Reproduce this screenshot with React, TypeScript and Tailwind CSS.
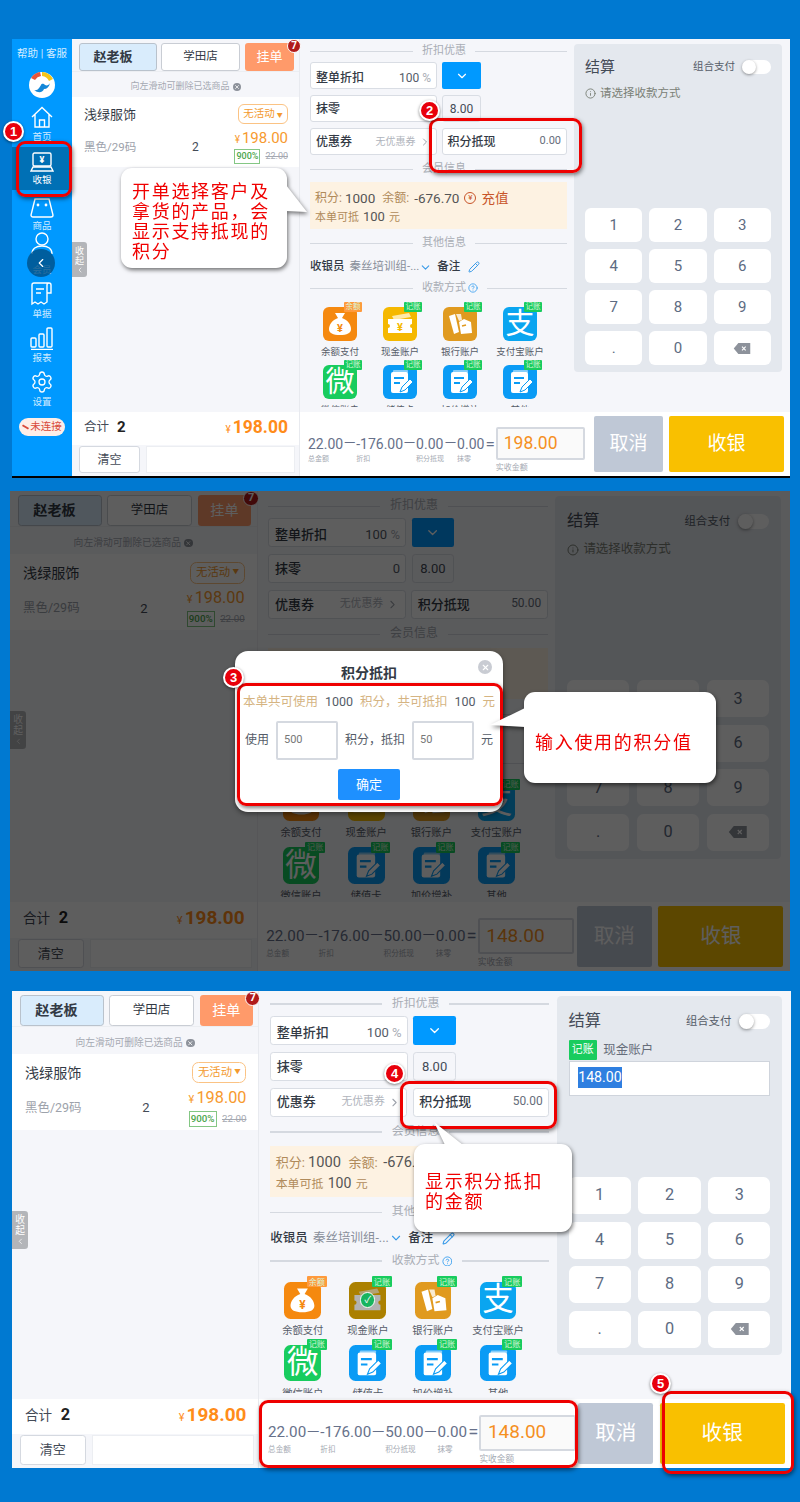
// Cashier walkthrough: three annotated shots of the POS checkout screen

import React from 'react';
import { ChevronDown, ChevronLeft, ChevronRight, CircleHelp, Info, Pencil, Settings, X } from 'lucide-react';

function Section({ title, help }: { title: string; help?: boolean }) {
  return (
    <div className="flex h-[14px] items-center gap-[8px] text-[11px] text-[#a9adb5]">
      <div className="h-px w-[103px] bg-[#d5d9e0]" />
      <span className="flex items-center gap-[2px] whitespace-nowrap px-px">
        {title}
        {help && <CircleHelp className="h-[10px] w-[10px] text-[#3aa0f0]" />}
      </span>
      <div className="h-px flex-1 bg-[#d5d9e0]" />
    </div>
  );
}

function Field({ label, className, children }: { label: string; className: string; children?: React.ReactNode }) {
  return (
    <div className={`flex h-[27px] items-center justify-between rounded-[3px] border border-[#d9dde4] bg-white px-[5px] ${className}`}>
      <span className="whitespace-nowrap text-[12px] font-medium text-[#333a45]">{label}</span>
      {children}
    </div>
  );
}

function Tag({ text = '记账', orange }: { text?: string; orange?: boolean }) {
  return (
    <span className={`absolute right-[-5px] top-[-5px] flex h-[10px] w-[18px] items-center justify-center rounded-[1px] text-[7.5px] leading-none text-[#d8f5d8] ${orange ? 'bg-[#ff9a3c]' : 'bg-[#18cc5e]'}`}>
      {text}
    </span>
  );
}

function NoteIcon() {
  return (
    <svg viewBox="0 0 34 34" className="h-full w-full">
      <rect x="10" y="5" width="15" height="3" rx="1" fill="#fff" opacity=".5" />
      <rect x="8" y="7" width="17" height="21" rx="2" fill="#fff" />
      <path d="M11 13h10M11 18h6" stroke="#0a9bf5" strokeWidth="2" />
      <path d="M17 27l2-5 8-8 3 3-8 8z" fill="#fff" stroke="#0a9bf5" />
    </svg>
  );
}

function BagIcon() {
  return (
    <svg viewBox="0 0 34 34" className="h-full w-full">
      <path d="M12 6h10l-3 5c6 2 9 7 9 11 0 4-4 6-11 6S6 26 6 22c0-4 3-9 9-11z" fill="#fff" />
      <text x="17" y="25" textAnchor="middle" fontSize="11" fontWeight="700" fill="#f5890f">¥</text>
    </svg>
  );
}

function TicketIcon() {
  return (
    <svg viewBox="0 0 34 34" className="h-full w-full">
      <path d="M9 9l17-3 2 4-17 3z" fill="#ffe9a8" />
      <path d="M5 12h24v5a2 2 0 000 4v5H5v-5a2 2 0 000-4z" fill="#fff" />
      <text x="17" y="24" textAnchor="middle" fontSize="11" fontWeight="700" fill="#f5b800">¥</text>
    </svg>
  );
}

function BankIcon() {
  return (
    <svg viewBox="0 0 34 34" className="h-full w-full">
      <path d="M6 9l6-2 4 18-5 2z" fill="#fff" />
      <path d="M13 7l5 0 1 6-3 1z" fill="#fff" opacity=".8" />
      <path d="M16 15l5-3 7 3 1 11-11 1z" fill="#fff" />
      <path d="M19 19l4-1" stroke="#e09a1f" strokeWidth="1.5" />
    </svg>
  );
}

function PayItem({ label, color, tag, children, checked }: { label: string; color: string; tag?: React.ReactNode; children: React.ReactNode; checked?: boolean }) {
  return (
    <div className="flex h-[58px] flex-col items-center">
      <div className={`relative flex h-[34px] w-[34px] items-center justify-center rounded-[6px] ${color}`}>
        {children}
        {checked && (
          <div className="absolute inset-0 flex items-center justify-center rounded-[6px] bg-black/30">
            <div className="flex h-[14px] w-[14px] items-center justify-center rounded-full border border-white bg-[#18b45e] text-[9px] text-white">✓</div>
          </div>
        )}
        {tag ?? <Tag />}
      </div>
      <span className="mt-[5px] whitespace-nowrap text-[9.5px] leading-[12px] text-[#555c68]">{label}</span>
    </div>
  );
}

function Sum({ value, label }: { value: string; label: string }) {
  return (
    <div className="flex flex-col">
      <span className="text-[14px] leading-[18px] text-[#67718a]">{value}</span>
      <span className="mt-[2px] whitespace-nowrap text-[7px] leading-[9px] text-[#a5aab3]">{label}</span>
    </div>
  );
}

function Minus() {
  return <span className="mx-px text-[11px] leading-[18px] text-[#67718a]">一</span>;
}

function Terminal({ className, midTop, points, received, zero, cash }: { className: string; midTop: string; points: string; received: string; zero?: boolean; cash?: boolean }) {
  const keys = ['1', '2', '3', '4', '5', '6', '7', '8', '9', '.', '0'];
  return (
    <div className={`flex bg-[#f5f6fa] [font-family:Roboto,'Noto_Sans_CJK_SC',sans-serif] ${className}`}>
      {/* Order column */}
      <div className="flex w-[228px] shrink-0 flex-col border-r border-[#e8eaef]">
        <div className="flex h-[33px] items-start gap-[4px] border-b border-[#eceef2] pl-[7px] pt-[4px]">
          <div className="flex h-[28px] w-[78px] items-center justify-center rounded-[3px] border border-[#b9c2cc] bg-[#d9ecfc] pr-[10px] text-[13px] font-bold text-[#333a45]">赵老板</div>
          <div className="flex h-[28px] w-[79px] items-center justify-center rounded-[3px] border border-[#c9cdd4] bg-white text-[11.5px] text-[#333a45]">学田店</div>
          <div className="relative ml-px flex h-[28px] w-[49px] items-center justify-center rounded-[3px] bg-[#ff9a6a] text-[13px] text-white">
            挂单
            <span className="absolute right-[-7px] top-[-4px] flex h-[14px] w-[14px] items-center justify-center rounded-full border border-white bg-[#b01a1a] text-[10px] font-bold leading-none text-white">7</span>
          </div>
        </div>
        <div className="flex h-[25px] items-center justify-center gap-[3px] pt-[5px] text-[9px] text-[#a5a9b2]">
          向左滑动可删除已选商品
          <span className="flex h-[8px] w-[8px] items-center justify-center rounded-full bg-[#8d929b]">
            <X className="h-[6px] w-[6px] text-white" strokeWidth={3} />
          </span>
        </div>
        <div className="relative flex-1">
          <div className="flex h-[70px] flex-col justify-between bg-white pb-[3px] pl-[12px] pr-[11px] pt-[7px]">
            <div className="flex items-center justify-between">
              <span className="pt-px text-[13px] text-[#333a45]">浅绿服饰</span>
              <span className="flex h-[20px] w-[50px] items-center justify-center gap-[2px] rounded-[6px] border border-[#fbc384] text-[10.5px] text-[#f39a2e]">
                无活动<span className="text-[6px]">▼</span>
              </span>
            </div>
            <div className="flex items-end justify-between">
              <span className="mb-[8px] w-[108px] text-[11.5px] text-[#9da2ab]">黑色/29码</span>
              <span className="mb-[8px] w-[38px] text-[12px] text-[#444b57]">2</span>
              <div className="flex flex-1 flex-col items-end gap-[1px]">
                <span className="whitespace-nowrap text-[15px] leading-[17px] text-[#f79a2e]"><span className="mr-[2px] text-[10px]">¥</span>198.00</span>
                <span className="flex items-center gap-[5px] whitespace-nowrap text-[9px] leading-[13px] text-[#a5a9b2]">
                  <span className="border border-[#84c784] px-px font-medium text-[#4ca64c]">900%</span>
                  <span className="line-through">22.00</span>
                </span>
              </div>
            </div>
          </div>
          <div className="absolute left-0 top-[145px] flex h-[35px] w-[15px] flex-col items-center justify-center rounded-r-[3px] bg-[#b3b5b9] text-[9px] leading-[10px] text-white">
            收<br />起
            <ChevronLeft className="h-[8px] w-[8px]" />
          </div>
        </div>
        <div className="flex h-[33px] items-center justify-between bg-white pb-[3px] pl-[12px] pr-[11px]">
          <span className="flex items-center gap-[8px] text-[12.5px] text-[#444b57]">合计<b className="text-[15px] text-[#222]">2</b></span>
          <span className="text-[17.5px] font-bold text-[#ff8c1a]"><span className="mr-[2px] text-[10px] font-normal">¥</span>198.00</span>
        </div>
        <div className="flex max-h-[31px] flex-1 items-start gap-[6px] pl-[7px] pr-[4px] pt-[1px]">
          <div className="flex h-[27px] w-[61px] items-center justify-center rounded-[3px] border border-[#d5d9e0] bg-white text-[12px] text-[#444b57]">清空</div>
          <div className="h-[27px] flex-1 border border-[#eceef2] bg-white" />
        </div>
      </div>

      {/* Checkout column */}
      <div className="flex min-w-0 flex-1 flex-col">
        <div className="flex min-h-0 flex-1">
          <div className={`mb-[5px] w-[274px] shrink-0 overflow-hidden pl-[10px] pr-[7px] ${midTop}`}>
            <Section title="折扣优惠" />
            <div className="mt-[4px] flex gap-[5px]">
              <Field label="整单折扣" className="w-[127px] pt-[4px]">
                <span className="text-[12px] text-[#555c68]">100 <span className="text-[#a9adb5]">%</span></span>
              </Field>
              <div className="flex h-[27px] w-[39px] items-center justify-center rounded-[2px] bg-[#0099ff]">
                <ChevronDown className="h-[14px] w-[14px] text-white" />
              </div>
            </div>
            <div className="mt-[6px] flex gap-[5px]">
              <Field label="抹零" className="w-[127px]">
                <span className="text-[12px] text-[#555c68]">{zero ? '0' : ''}</span>
              </Field>
              <div className="flex h-[27px] w-[39px] items-center justify-center rounded-[3px] border border-[#d9dde4] text-[12px] text-[#444b57]">8.00</div>
            </div>
            <div className="mt-[6px] flex gap-[5px]">
              <Field label="优惠券" className="w-[127px]">
                <span className="flex items-center text-[10px] text-[#b0b4bc]">无优惠券<ChevronRight className="ml-[3px] h-[12px] w-[12px] text-[#9da2ab]" /></span>
              </Field>
              <Field label="积分抵现" className="w-[126px]">
                <span className="text-[11px] text-[#666d7a]">{points}</span>
              </Field>
            </div>
            <div className="mt-[7px]"><Section title="会员信息" /></div>
            <div className="mt-[6px] h-[47px] bg-[#fdf2e2] px-[5px] pt-[5px] text-[#b08a5a]">
              <div className="flex items-center whitespace-nowrap text-[12px] leading-[22px]">
                积分:<span className="ml-[3px] text-[13.5px] text-[#555]">1000</span>
                <span className="ml-[7px]">余额:</span><span className="ml-[5px] text-[13.5px] text-[#555]">-676.70</span>
                <span className="ml-[5px] flex h-[12px] w-[12px] items-center justify-center rounded-full border border-[#c8552a] text-[8px] text-[#c8552a]">¥</span>
                <span className="ml-[5px] text-[13.5px] text-[#c8552a]">充值</span>
              </div>
              <div className="whitespace-nowrap text-[11px] leading-[16px]">本单可抵<span className="mx-[4px] text-[13px] text-[#555]">100</span>元</div>
            </div>
            <div className="mt-[7px]"><Section title="其他信息" /></div>
            <div className="mt-[7px] flex h-[20px] items-center whitespace-nowrap text-[11.5px]">
              <span className="font-medium text-[#333a45]">收银员</span>
              <span className="ml-[5px] text-[#888e99]">秦丝培训组-...</span>
              <ChevronDown className="h-[13px] w-[13px] text-[#3a9be8]" />
              <span className="ml-[5px] font-medium text-[#333a45]">备注</span>
              <Pencil className="ml-[8px] h-[12px] w-[12px] text-[#3a9be8]" />
            </div>
            <div className="mt-[4px]"><Section title="收款方式" help /></div>
            <div className="mt-[12px] grid grid-cols-[60px_60px_60px_60px]">
              <PayItem label="余额支付" color="bg-[#f5890f]" tag={<Tag text="余额" orange />}><BagIcon /></PayItem>
              <PayItem label="现金账户" color="bg-[#f5b800]" checked={cash}><TicketIcon /></PayItem>
              <PayItem label="银行账户" color="bg-[#e09a1f]"><BankIcon /></PayItem>
              <PayItem label="支付宝账户" color="bg-[#0aa5f0]"><span className="text-[29px] leading-none text-white">支</span></PayItem>
              <PayItem label="微信账户" color="bg-[#18cc5e]"><span className="text-[29px] leading-none text-white">微</span></PayItem>
              <PayItem label="储值卡" color="bg-[#0a9bf5]"><NoteIcon /></PayItem>
              <PayItem label="加价增补" color="bg-[#0a9bf5]"><NoteIcon /></PayItem>
              <PayItem label="其他" color="bg-[#0a9bf5]"><NoteIcon /></PayItem>
            </div>
          </div>

          <div className="mb-[40px] mr-[8px] mt-[5px] flex flex-1 flex-col rounded-[4px] bg-[#e4e8ee] px-[11px] pb-[7px] pt-[12px]">
            <div className="flex items-center justify-between">
              <span className="text-[15px] text-[#444b57]">结算</span>
              <span className="flex items-center gap-[7px] text-[10.5px] text-[#555c68]">
                组合支付
                <span className="flex h-[14px] w-[29px] items-center rounded-full bg-white">
                  <span className="h-[14px] w-[14px] rounded-full bg-white shadow-[0_1px_3px_rgba(0,0,0,0.4)]" />
                </span>
              </span>
            </div>
            {cash ? (
              <div className="mt-[6px]">
                <div className="flex items-center gap-[6px] text-[11.5px] text-[#666d7a]">
                  <span className="rounded-[1px] bg-[#18cc5e] px-[3px] text-[10px] leading-[18px] text-white">记账</span>
                  现金账户
                </div>
                <div className="mt-[1px] flex h-[32px] items-center border border-[#cfd4dc] bg-white pb-[2px] pl-[8px] text-[13px]">
                  <span className="bg-[#2f7fe0] text-white">148.00</span>
                </div>
              </div>
            ) : (
              <div className="mt-[6px] flex items-center gap-[4px] text-[11.5px] text-[#7a8076]">
                <Info className="h-[11px] w-[11px]" />
                请选择收款方式
              </div>
            )}
            <div className="mt-auto grid grid-cols-3 gap-x-[7px] gap-y-[7px]">
              {keys.map(k => (
                <div key={k} className="flex h-[34px] items-center justify-center rounded-[6px] bg-white text-[15px] text-[#5d6b82]">{k}</div>
              ))}
              <div className="flex h-[34px] items-center justify-center rounded-[6px] bg-white">
                <svg viewBox="0 0 18 12" className="h-[11px] w-[18px]">
                  <path d="M5 0h13v12H5L0 6z" fill="#8d929b" />
                  <path d="M9 4l4 4M13 4l-4 4" stroke="#fff" strokeWidth="1.2" />
                </svg>
              </div>
            </div>
          </div>
        </div>

        {/* Sums and actions */}
        <div className="flex h-[64px] shrink-0 items-start bg-white pl-[8px] pt-[4px]">
          <div className="mt-[19px] flex items-start">
            <Sum value="22.00" label="总金额" />
            <Minus />
            <Sum value="-176.00" label="折扣" />
            <Minus />
            <Sum value={points} label="积分抵现" />
            <Minus />
            <Sum value="0.00" label="抹零" />
            <span className="ml-px text-[17px] leading-[18px] text-[#67718a]">=</span>
          </div>
          <div className="ml-px mt-[11px] flex flex-col">
            <div className="flex h-[33px] w-[89px] items-center rounded-[2px] border-2 border-[#d5d9e0] bg-[#fafafa] pl-[6px] text-[17.5px] text-[#f5901f]">{received}</div>
            <span className="mt-[3px] text-[8px] leading-[10px] text-[#a5aab3]">实收金额</span>
          </div>
          <div className="ml-auto flex gap-[6px] pr-[6px]">
            <div className="flex h-[56px] w-[69px] items-center justify-center rounded-[2px] bg-[#bfc8d6] text-[19px] text-white">取消</div>
            <div className="flex h-[56px] w-[115px] items-center justify-center rounded-[2px] bg-[#f9c000] text-[19px] text-white">收银</div>
          </div>
        </div>
      </div>
    </div>
  );
}

function NavItem({ label, children }: { label: string; children: React.ReactNode }) {
  return (
    <div className="flex h-[44px] flex-col items-center justify-end text-[9.5px] leading-[12px] text-[#cfeaff]">
      {children}
      <span className="mt-[2px]">{label}</span>
    </div>
  );
}

function Sidebar() {
  return (
    <div className="flex w-[60px] shrink-0 flex-col items-center bg-[#0099ff] [font-family:Roboto,'Noto_Sans_CJK_SC',sans-serif]">
      <div className="mt-[8px] whitespace-nowrap text-[10.5px] leading-[14px] text-[#d5edff]">帮助 | 客服</div>
      <svg viewBox="0 0 26 26" className="mt-[11px] h-[26px] w-[26px]">
        <circle cx="13" cy="13" r="13" fill="#fff" />
        <path d="M13 0a13 13 0 0111 7l-4 2a9 9 0 00-7-5z" fill="#f5c518" />
        <path d="M2 6a13 13 0 019-6l1 4a9 9 0 00-6 4z" fill="#e8553a" />
        <path d="M5 18c4 1 5-2 7-5 1-2 3-1 4 0 2 1 4 0 5-2-1 4-3 6-6 6-1 3-5 5-10 1z" fill="#1488d8" />
      </svg>
      <div className="mt-px w-full">
        <NavItem label="首页">
          <svg viewBox="0 0 24 24" className="h-[24px] w-[24px]" fill="none" stroke="#fff" strokeWidth="1.4">
            <path d="M2 12L12 2.5 22 12M5 9.5V22h14V9.5M9.5 22v-7h5v7" />
          </svg>
        </NavItem>
        <div className="mb-[-2px] mt-[4px] flex h-[43px] flex-col items-center justify-center bg-[#0070b5] text-[9.5px] leading-[12px] text-white">
          <svg viewBox="0 0 24 20" className="h-[20px] w-[24px]" fill="none" stroke="#fff" strokeWidth="1.4">
            <rect x="3" y="1" width="18" height="13" rx="1.5" />
            <path d="M1 19l2-4h18l2 4z" />
            <text x="12" y="11" textAnchor="middle" fontSize="9" fontWeight="700" fill="#fff" stroke="none">¥</text>
          </svg>
          <span className="mt-[2px]">收银</span>
        </div>
        <NavItem label="商品">
          <svg viewBox="0 0 24 20" className="h-[20px] w-[24px]" fill="none" stroke="#fff" strokeWidth="1.4">
            <path d="M5 1h14l4 16a2 2 0 01-2 2H3a2 2 0 01-2-2z" />
            <circle cx="8" cy="7" r=".7" fill="#fff" />
            <circle cx="16" cy="7" r=".7" fill="#fff" />
          </svg>
        </NavItem>
        <div className="relative">
          <NavItem label="会员">
            <svg viewBox="0 0 24 30" className="h-[30px] w-[24px]" fill="none" stroke="#fff" strokeWidth="1.4">
              <circle cx="12" cy="7" r="6" />
              <path d="M2 22c0-5 4-8 10-8s10 3 10 8" />
            </svg>
          </NavItem>
          <div className="absolute left-[15px] top-[17px] flex h-[28px] w-[28px] items-center justify-center rounded-full bg-[#004f86]/80">
            <ChevronLeft className="h-[14px] w-[14px] text-white" />
          </div>
        </div>
        <NavItem label="单据">
          <svg viewBox="0 0 24 24" className="h-[24px] w-[24px]" fill="none" stroke="#fff" strokeWidth="1.4">
            <path d="M19 1H4a2 2 0 00-2 2v19l3-2 3 2 3-2 3 2 3-2V3a2 2 0 012-2 2 2 0 012 2v8h-4M6 7h8M6 11h5" />
          </svg>
        </NavItem>
        <NavItem label="报表">
          <svg viewBox="0 0 24 24" className="h-[24px] w-[24px]" fill="none" stroke="#fff" strokeWidth="1.4">
            <rect x="1" y="12" width="5" height="9" rx="1" />
            <rect x="9" y="8" width="5" height="13" rx="1" />
            <rect x="17" y="2" width="5" height="19" rx="1" />
            <path d="M1 23.5h22" />
          </svg>
        </NavItem>
        <NavItem label="设置">
          <Settings className="h-[24px] w-[24px] text-white" strokeWidth={1.3} />
        </NavItem>
      </div>
      <div className="mt-[10px] flex h-[18px] w-[46px] items-center justify-center rounded-full bg-[#fdeee8] text-[10.5px] text-[#d84a3a]">
        <span className="mr-px h-[2px] w-[7px] rotate-[30deg] bg-[#d84a3a]" />未连接
      </div>
    </div>
  );
}

function Marker({ n, className }: { n: number; className: string }) {
  return (
    <div className={`absolute flex h-[21px] w-[21px] items-center justify-center rounded-full border-2 border-white bg-[#e8000b] text-[13px] font-bold text-white shadow-[0_1px_3px_rgba(0,0,0,0.5)] [font-family:'Liberation_Sans',sans-serif] ${className}`}>
      {n}
    </div>
  );
}

function RedBox({ className }: { className: string }) {
  return <div className={`absolute rounded-[9px] border-[3px] border-[#ee0000] shadow-[1px_2px_4px_rgba(0,0,0,0.5)] ${className}`} />;
}

function Callout({ className, tail, children }: { className: string; tail: React.ReactNode; children: React.ReactNode }) {
  return (
    <div className={`absolute rounded-[11px] bg-white text-[18px] leading-[20px] tracking-[1.7px] text-[#f00000] drop-shadow-[1px_2px_2px_rgba(0,0,0,0.55)] [font-family:'Noto_Sans_CJK_SC',sans-serif] ${className}`}>
      {tail}
      {children}
    </div>
  );
}

export default function App() {
  return (
    <div className="h-[1502px] w-[800px] overflow-hidden bg-[#0079d1] pt-[39px]">
      {/* Shot 1: member points shown */}
      <div className="relative h-[439px]">
        <div className="ml-[12px] flex h-[439px] w-[778px] border-b-2 border-black">
          <Sidebar />
          <Terminal className="w-[718px]" midTop="pt-[5px]" points="0.00" received="198.00" />
        </div>
        <RedBox className="left-[16px] top-[102px] h-[56px] w-[56px]" />
        <Marker n={1} className="left-[3px] top-[82px]" />
        <RedBox className="left-[429px] top-[79px] h-[55px] w-[153px]" />
        <Marker n={2} className="left-[419px] top-[61px]" />
        <Callout
          className="left-[121px] top-[129px] h-[100px] w-[166px] pl-[11px] pr-[6px] pt-[12px]"
          tail={<svg viewBox="0 0 22 27" className="absolute left-[165px] top-[17px] h-[27px] w-[22px]"><polygon points="0,0 21,27 0,26" fill="#fff" /></svg>}
        >
          开单选择客户及拿货的产品，会显示支持抵现的积分
        </Callout>
      </div>

      {/* Shot 2: points dialog over dimmed screen */}
      <div className="relative mt-[13px] h-[480px]">
        <div className="ml-[10px] h-[480px] w-[780px]">
          <Terminal className="h-[442.4px] w-[718px] [zoom:1.086]" midTop="pt-[7px]" points="50.00" received="148.00" zero />
        </div>
        <div className="absolute bottom-0 left-[10px] top-0 w-[780px] bg-black/[0.63]" />
        <div className="absolute left-[235px] top-[160px] h-[161px] w-[268px] rounded-[13px] bg-white shadow-[0_2px_5px_rgba(0,0,0,0.4)] [font-family:Roboto,'Noto_Sans_CJK_SC',sans-serif]">
          <div className="relative pt-[11px] text-center text-[14px] font-bold leading-[22px] text-[#333a45]">
            积分抵扣
            <span className="absolute right-[11px] top-[9px] flex h-[14px] w-[14px] items-center justify-center rounded-full bg-[#c9ccd3]">
              <X className="h-[9px] w-[9px] text-white" strokeWidth={3} />
            </span>
          </div>
          <div className="mt-[9px] flex justify-center gap-[7px] whitespace-nowrap text-[12.5px] text-[#d5b482]">
            本单共可使用<span className="text-[#555c68]">1000</span>积分，共可抵扣<span className="text-[#555c68]">100</span>元
          </div>
          <div className="mt-[9px] flex items-center justify-center gap-[7px] whitespace-nowrap text-[12px] text-[#555c68]">
            使用
            <div className="flex h-[39px] w-[62px] items-center rounded-[2px] border-2 border-[#d5d9e0] pl-[6px] text-[11px] text-[#777]">500</div>
            积分，抵扣
            <div className="flex h-[39px] w-[62px] items-center rounded-[2px] border-2 border-[#d5d9e0] pl-[6px] text-[11px] text-[#777]">50</div>
            元
          </div>
          <div className="mx-auto mt-[9px] flex h-[31px] w-[62px] items-center justify-center rounded-[2px] bg-[#1e90ff] text-[13px] text-white">确定</div>
        </div>
        <RedBox className="left-[237px] top-[192px] h-[123px] w-[266px]" />
        <Marker n={3} className="left-[223px] top-[176px]" />
        <Callout
          className="left-[524px] top-[201px] h-[91px] w-[192px] pl-[11px] pt-[39px]"
          tail={<svg viewBox="0 0 36 20" className="absolute left-[-34px] top-[16px] h-[20px] w-[36px]"><polygon points="35,0 0,17 35,19" fill="#fff" /></svg>}
        >
          输入使用的积分值
        </Callout>
      </div>

      {/* Shot 3: discount applied, ready to settle */}
      <div className="relative mt-[20px] h-[477px]">
        <div className="ml-[12px] h-[477px] w-[778px]">
          <Terminal className="h-[439.6px] w-[718px] [zoom:1.085]" midTop="pt-[5px]" points="50.00" received="148.00" cash />
        </div>
        <RedBox className="left-[400px] top-[90px] h-[48px] w-[157px]" />
        <Marker n={4} className="left-[384px] top-[72px]" />
        <Callout
          className="left-[414px] top-[153px] h-[88px] w-[158px] pl-[11px] pr-[20px] pt-[26px]"
          tail={<svg viewBox="0 0 30 23" className="absolute left-[20px] top-[-22px] h-[23px] w-[30px]"><polygon points="0,0 11,23 29,23" fill="#fff" /></svg>}
        >
          显示积分抵扣的金额
        </Callout>
        <RedBox className="left-[259px] top-[409px] h-[68px] w-[319px]" />
        <RedBox className="left-[662px] top-[400px] h-[83px] w-[132px]" />
        <Marker n={5} className="left-[650px] top-[382px]" />
      </div>
    </div>
  );
}
